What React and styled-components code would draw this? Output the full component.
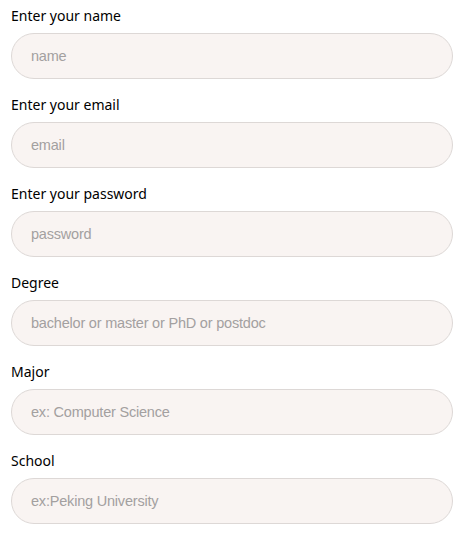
import React from "react";
import styled, { createGlobalStyle } from "styled-components";

const Global = createGlobalStyle`
  body {
    margin: 0;
    background: #fff;
    font-family: "Noto Sans", "Open Sans", sans-serif;
  }
`;

const Form = styled.form`
  display: flex;
  flex-direction: column;
  gap: 16px;
  padding: 6px 21px 0 11px;
`;

const Field = styled.div`
  display: flex;
  flex-direction: column;
  gap: 7px;
`;

const Label = styled.label`
  font-size: 14px;
  line-height: 20px;
  color: #000;
`;

const Input = styled.input`
  box-sizing: border-box;
  height: 46px;
  width: 100%;
  border: 1px solid #ddd8d6;
  border-radius: 23px;
  background: #f9f4f2;
  padding: 0 19px;
  font-family: "Liberation Sans", Arial, sans-serif;
  font-size: 14.5px;
  letter-spacing: -0.2px;
  color: #333;
  outline: none;
  &::placeholder {
    color: #a3a0a0;
  }
`;

const fields = [
  { label: "Enter your name", placeholder: "name", type: "text" },
  { label: "Enter your email", placeholder: "email", type: "email" },
  { label: "Enter your password", placeholder: "password", type: "password" },
  { label: "Degree", placeholder: "bachelor or master or PhD or postdoc", type: "text" },
  { label: "Major", placeholder: "ex: Computer Science", type: "text" },
  { label: "School", placeholder: "ex:Peking University", type: "text" },
];

export default function App() {
  return (
    <>
      <Global />
      <Form>
        {fields.map((f) => (
          <Field key={f.label}>
            <Label>{f.label}</Label>
            <Input type={f.type} placeholder={f.placeholder} />
          </Field>
        ))}
      </Form>
    </>
  );
}
